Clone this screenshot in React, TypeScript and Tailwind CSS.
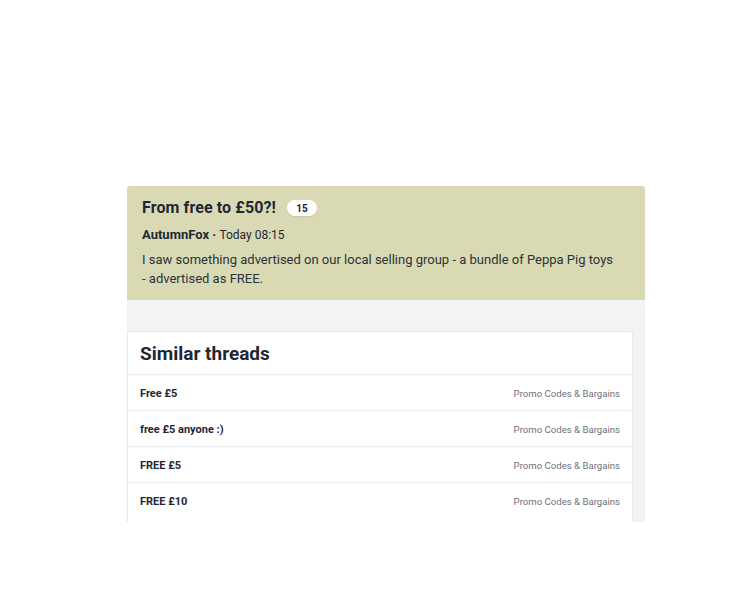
const threads = [
  { title: 'Free £5', forum: 'Promo Codes & Bargains' },
  { title: 'free £5 anyone :)', forum: 'Promo Codes & Bargains' },
  { title: 'FREE £5', forum: 'Promo Codes & Bargains' },
  { title: 'FREE £10', forum: 'Promo Codes & Bargains' },
];

export default function App() {
  return (
    <div className="min-h-[600px] bg-white pt-[186px] pl-[127px]" style={{ fontFamily: 'Roboto, sans-serif' }}>
      <div className="w-[518px] h-[336px] overflow-hidden bg-[#f2f3f5] rounded-t-[3px]">
        {/* Thread header */}
        <div className="bg-[#d9dab3] px-[15px] pt-[12px] h-[114px] text-[#1f2733]">
          <div className="flex items-center gap-[11px]">
            <h1 className="text-[16px] font-bold leading-[20px] tracking-[0.1px]">From free to £50?!</h1>
            <span className="bg-white rounded-full w-[30px] h-[16px] flex items-center justify-center text-[10px] font-bold shadow-[0_1px_1px_rgba(0,0,0,0.08)]">
              15
            </span>
          </div>
          <div className="mt-[9px] text-[13px] leading-[16px]">
            <span className="font-bold">AutumnFox</span>
            <span className="font-bold"> · </span>
            <span className="text-[12px]">Today 08:15</span>
          </div>
          <p className="mt-[7px] text-[13px] leading-[19px] text-[#2a323d] pr-[15px]">
            I saw something advertised on our local selling group - a bundle of Peppa Pig toys - advertised as FREE.
          </p>
        </div>

        {/* Similar threads */}
        <div className="pt-[31px] pr-[12px]">
          <div className="bg-white border border-[#e6e8eb] rounded-tr-[3px] pb-[20px]">
            <h2 className="px-[12px] h-[43px] pt-[2px] flex items-center text-[19px] font-bold text-[#1f2733] border-b border-[#eceef0]">
              Similar threads
            </h2>
            {threads.map(t => (
              <div
                key={t.title}
                className="flex items-center justify-between h-[36px] pt-[3px] px-[12px] border-b border-[#eceef0] last:border-b-0"
              >
                <span className="text-[11px] font-bold text-[#1f2733]">{t.title}</span>
                <span className="text-[9.6px] text-[#6b7280]">{t.forum}</span>
              </div>
            ))}
          </div>
        </div>
      </div>
    </div>
  );
}
